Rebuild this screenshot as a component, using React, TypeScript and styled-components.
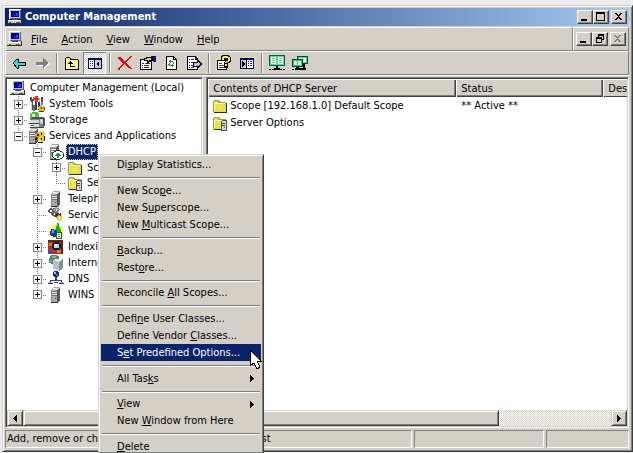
import React from 'react';
import styled, { createGlobalStyle, css } from 'styled-components';

const face = '#d4d0c8';
const shade = '#808080';
const dark = '#404040';
const navy = '#0a246a';

const GlobalStyle = createGlobalStyle`
  * { box-sizing: border-box; }
  html, body, #root { height: 100%; }
  body {
    margin: 0;
    overflow: hidden;
    background: #ececec;
    color: #000;
    font: 11px/16px "DejaVu Sans Condensed", "DejaVu Sans", Tahoma, sans-serif;
    cursor: default;
  }
  button { font: inherit; color: inherit; padding: 0; margin: 0; border: 0; background: none; }
  svg { display: block; flex: none; }
`;

/* ---------- window frame ---------- */

const Desktop = styled.div`
  display: flex;
  height: 100%;
  padding: 5px 0 1px 2px;
`;

const WindowFrame = styled.div`
  display: flex;
  flex-direction: column;
  flex: 1;
  min-width: 0;
  padding: 2px 3px 3px 2px;
  background: ${face};
  border: 1px solid;
  border-color: ${face} ${dark} ${dark} ${face};
  box-shadow: inset 1px 1px #fff, inset -1px -1px ${shade};
`;

const TitleBar = styled.header`
  display: flex;
  align-items: center;
  height: 18px;
  padding: 0 2px;
  margin-bottom: 1px;
  background: linear-gradient(to right, ${navy}, #a6caf0);
  color: #fff;
`;

const TitleText = styled.h1`
  flex: 1;
  margin: 0 0 0 2px;
  font-size: 11px;
  font-weight: bold;
  line-height: 18px;
`;

const CaptionButtons = styled.div`
  display: flex;
`;

const CaptionButton = styled.button<{ $apart?: boolean }>`
  display: flex;
  align-items: center;
  justify-content: center;
  width: 16px;
  height: 14px;
  margin-left: ${p => (p.$apart ? 2 : 0)}px;
  background: ${face};
  border: 1px solid;
  border-color: #fff ${dark} ${dark} #fff;
  box-shadow: inset -1px -1px ${shade};
  color: #000;
  &:disabled { color: ${shade}; }
`;

const bar = css`
  display: flex;
  align-items: center;
  height: 24px;
  border: 1px solid;
  border-color: #fff ${shade} ${shade} #fff;
`;

const MenuRow = styled.div`
  display: flex;
`;

const MenuBar = styled.nav`
  ${bar}
  flex: 1;
  padding-left: 1px;
`;

const ChildButtons = styled.div`
  ${bar}
  padding: 0 2px;
`;

const MenuTitle = styled.button`
  height: 20px;
  padding: 2px 7px 0;
  &:first-of-type { margin-left: 1px; }
`;

const ToolBar = styled.div`
  ${bar}
  padding-left: 1px;
`;

const ToolButton = styled.button<{ $pressed?: boolean }>`
  display: flex;
  align-items: center;
  justify-content: center;
  width: 23px;
  height: 22px;
  ${p =>
    p.$pressed &&
    css`
      background: repeating-conic-gradient(#fff 0 25%, ${face} 0 50%) 0 0 / 2px 2px;
      box-shadow: inset 1px 1px ${shade}, inset -1px -1px #fff;
    `}
`;

const ToolDivider = styled.span`
  width: 2px;
  height: 20px;
  margin: 0 2px 0 3px;
  border-left: 1px solid ${shade};
  border-right: 1px solid #fff;
`;

/* ---------- panes ---------- */

const Panes = styled.main`
  display: grid;
  grid-template-columns: minmax(0, 198fr) minmax(0, 422fr);
  gap: 3px;
  flex: 1;
  min-height: 0;
  padding-top: 1px;
  margin-bottom: 2px;
  border-top: 1px solid #fff;
`;

const Pane = styled.section`
  display: flex;
  flex-direction: column;
  min-width: 0;
  min-height: 0;
  overflow: hidden;
  background: #fff;
  border: 1px solid;
  border-color: ${shade} #fff #fff ${shade};
  box-shadow: inset 1px 1px ${dark}, inset -1px -1px ${face};
  padding: 1px;
`;

const PaneBody = styled.div`
  flex: 1;
  min-height: 0;
  overflow: hidden;
`;

const Tree = styled.ul`
  list-style: none;
  margin: 0;
  padding: 1px 0 0 2px;
`;

const TreeRow = styled.li<{ $short?: boolean }>`
  display: flex;
  height: ${p => (p.$short ? 15 : 16)}px;
  white-space: nowrap;
`;

const dotsDown = 'repeating-linear-gradient(to bottom, #808080 0 1px, transparent 1px 2px)';
const dotsAcross = 'repeating-linear-gradient(to right, #808080 0 1px, transparent 1px 2px)';

type Guide = 'blank' | 'through' | 'branch' | 'last';

const guides: Record<Guide, string> = {
  blank: 'none',
  through: `${dotsDown} 9px 0 / 1px 100% no-repeat`,
  branch: `${dotsDown} 9px 0 / 1px 100% no-repeat, ${dotsAcross} 9px 8px / 10px 1px no-repeat`,
  last: `${dotsDown} 9px 0 / 1px 8px no-repeat, ${dotsAcross} 9px 8px / 10px 1px no-repeat`,
};

const GuideCell = styled.span<{ $guide: Guide }>`
  display: flex;
  align-items: center;
  justify-content: center;
  width: 19px;
  background: ${p => guides[p.$guide]};
`;

const Expander = styled.button<{ $open?: boolean }>`
  width: 9px;
  height: 9px;
  border: 1px solid ${shade};
  background:
    linear-gradient(#000, #000) 1px 3px / 5px 1px no-repeat,
    ${p => (p.$open ? '' : 'linear-gradient(#000, #000) 3px 1px / 1px 5px no-repeat,')}
    #fff;
`;

const NodeIcon = styled.span`
  display: flex;
  align-items: center;
  margin: 0 2px 0 1px;
`;

const NodeLabel = styled.span<{ $selected?: boolean }>`
  padding: 0 2px;
  ${p => p.$selected && css`background: ${navy}; color: #fff; outline: 1px dotted #d8c080; outline-offset: -1px;`}
`;

const List = styled.table`
  width: 100%;
  table-layout: fixed;
  border-collapse: collapse;
`;

const HeadCell = styled.th<{ $width?: string }>`
  width: ${p => p.$width || 'auto'};
  height: 18px;
  padding: 1px 0 0 5px;
  white-space: nowrap;
  text-align: left;
  font-weight: normal;
  background: ${face};
  box-shadow: inset 1px 1px #fff, inset 0 -1px ${dark};
  &:not(:last-child) { box-shadow: inset 1px 1px #fff, inset -1px -1px ${dark}, inset -2px -2px ${shade}; }
`;

const Cell = styled.td<{ $first?: boolean }>`
  height: 17px;
  padding: 1px 0 0 ${p => (p.$first ? 4 : 5)}px;
  white-space: nowrap;
`;

const Entry = styled.span`
  display: flex;
  align-items: center;
  gap: 2px;
`;

/* ---------- scroll bar ---------- */

const ScrollBar = styled.div`
  display: flex;
  height: 16px;
  background: repeating-conic-gradient(#fff 0 25%, ${face} 0 50%) 0 0 / 2px 2px;
`;

const raised = css`
  background: ${face};
  border: 1px solid;
  border-color: ${face} ${dark} ${dark} ${face};
  box-shadow: inset 1px 1px #fff, inset -1px -1px ${shade};
`;

const ScrollArrow = styled.button`
  ${raised}
  display: flex;
  align-items: center;
  justify-content: center;
  width: 16px;
`;

const ScrollTrack = styled.div`
  flex: 1;
  display: flex;
`;

const ScrollThumb = styled.div<{ $share: number }>`
  ${raised}
  width: ${p => p.$share}%;
`;

/* ---------- status bar ---------- */

const StatusBar = styled.footer`
  display: grid;
  grid-template-columns: minmax(0, 406fr) minmax(0, 130fr) minmax(0, 83fr);
  gap: 2px;
  height: 18px;
`;

const StatusCell = styled.div`
  padding-left: 1px;
  overflow: hidden;
  white-space: nowrap;
  border: 1px solid;
  border-color: ${shade} #fff #fff ${shade};
`;

/* ---------- context menu ---------- */

const ContextMenu = styled.div`
  position: absolute;
  left: 98px;
  top: 154px;
  bottom: 0;
  width: 166px;
  padding: 2px;
  overflow: hidden;
  background: ${face};
  border: 1px solid;
  border-color: ${face} ${dark} ${shade} ${face};
  box-shadow: inset 1px 1px #fff, inset -1px 0 ${shade};
`;

const MenuItem = styled.button<{ $short?: boolean; $active?: boolean }>`
  display: flex;
  align-items: center;
  justify-content: space-between;
  width: 100%;
  height: ${p => (p.$short ? 16 : 17)}px;
  padding: 0 7px 0 16px;
  white-space: nowrap;
  ${p => p.$active && css`background: ${navy}; color: #fff;`}
`;

const MenuRule = styled.hr`
  height: 2px;
  margin: 4px 1px 3px;
  border: 0;
  border-top: 1px solid ${shade};
  border-bottom: 1px solid #fff;
`;

const Pointer = styled.svg`
  position: absolute;
  left: 249px;
  top: 349px;
`;

/* ---------- icons ---------- */

const Icon = ({ children, size = 16 }: { children: React.ReactNode; size?: number }) => (
  <svg width={size} height={size} viewBox="0 0 16 16" shapeRendering="crispEdges" aria-hidden="true">
    {children}
  </svg>
);

const ComputerIcon = () => (
  <Icon>
    <path d="M2 0h11l1 1v9H2z" fill="#c0c0c0" />
    <path d="M2 0h11v1H3v9H2z" fill="#fff" />
    <path d="M13 1h1v9H3V9h10z" fill="#606060" />
    <path d="M4 2h8v6H4z" fill="#0000b8" />
    <path d="M4 2h8v1H5v5H4z" fill="#101050" />
    <path d="M9 4h2v3H7V6h2z" fill="#2040ff" />
    <path d="M5 10h6v1H5z" fill="#404040" />
    <path d="M1 11h12l2 1v3H1z" fill="#c8c8c0" />
    <path d="M1 11h12v1H1z" fill="#fff" />
    <path d="M0 14h15v1H0zM14 10h1v5h-1z" fill="#303030" />
    <path d="M9 13h4v1H9z" fill="#606060" />
    <path d="M2 13h2v1H2z" fill="#00a000" />
  </Icon>
);

const ToolsIcon = () => (
  <Icon>
    <path d="M1 1h2v2h1V1h1v4H4v9H2V5H1z" fill="#505050" />
    <path d="M2 6h1v8H2z" fill="#d0d0d0" />
    <path d="M5 2h1V0h3v2h1v2H9v2H6V4H5z" fill="#e03020" />
    <path d="M6 6h2v8H6z" fill="#902010" />
    <path d="M10 2h1v5h-1z" fill="#b0b0b0" />
    <path d="M9 6h2v8H9z" fill="#1830c0" />
    <path d="M12 1h2v4h-2z" fill="#404040" />
    <path d="M12 5h2v4h-2z" fill="#20a0c0" />
    <path d="M4 9h2v6H4z" fill="#109090" />
    <path d="M10 10h1V9h2v1h2v1h1v2h-1v2h-5v-2H9v-2h1z" fill="#e0b820" />
    <path d="M12 11h1v2h-1zM10 15h5v1h-5zM15 11h1v3h-1z" fill="#504000" />
  </Icon>
);

const StorageIcon = () => (
  <Icon>
    <path d="M1 2l3-2h4l2 2v5H1z" fill="#58b848" />
    <path d="M3 2h3v3H3z" fill="#c8f0c0" />
    <path d="M1 7h14v8H1z" fill="#808080" />
    <path d="M3 5h12l1 2v7h-2V7H1z" fill="#505050" />
    <path d="M1 8h9v3H1zM1 12h9v3H1z" fill="#d8d8d8" />
    <path d="M11 7h3v5h-3z" fill="#b8c8c8" />
    <path d="M12 8h1v2h-1z" fill="#fff" />
    <path d="M0 11h10v1H0zM1 15h14v1H1z" fill="#404040" />
    <path d="M2 13h3v1H2z" fill="#20a020" />
  </Icon>
);

const Tower = ({ x = 0 }: { x?: number }) => (
  <g transform={`translate(${x} 0)`}>
    <path d="M3 2l3-2h6v12l-3 3H3z" fill="#a8a8a8" />
    <path d="M3 2l3-1h6L9 3H3z" fill="#e8e8e8" />
    <path d="M9 3l3-2v12l-3 3z" fill="#585858" />
    <path d="M3 3h1v12H3z" fill="#888" />
    <path d="M4 4h5v1H4zM4 6h5v1H4zM4 8h5v1H4z" fill="#707070" />
    <path d="M4 5h5v1H4zM4 7h5v1H4z" fill="#f0f0f0" />
    <path d="M7 11h1v1H7z" fill="#e02020" />
    <path d="M3 15h7v1H3z" fill="#303030" />
  </g>
);

const ServerIcon = () => <Icon><Tower /></Icon>;

const gear = 'M2 0h2v1h1V0h1v2h1v1H6v2H5v1H3V5H1V4H0V2h1V1h1z';

const ServiceAppsIcon = () => (
  <Icon>
    <Tower x={-3} />
    <path d={gear} transform="translate(6 4)" fill="#d8b020" />
    <path d={gear} transform="translate(9 8)" fill="#e8d030" />
    <path d={gear} transform="translate(9 3)" fill="#e0c028" />
    <path d="M8 6h2v2H8zM12 5h1v2h-1zM12 10h1v2h-1zM6 10h2v2H6zM9 14h5v1H9zM15 8h1v5h-1z" fill="#201800" />
  </Icon>
);

const DhcpIcon = () => (
  <Icon>
    <Tower x={-1} />
    <path d="M8 6h4v1h2v1h1v1h1v4h-1v1h-1v1h-2v1H8v-1H6v-1H5v-1H4V9h1V8h1V7h2z" fill="#303030" />
    <path d="M8 7h4v1h2v1h1v4h-1v1h-2v1H8v-1H6v-1H5V9h1V8h2z" fill="#fff" />
    <path d="M9 9h2v1h1v1h1v1h-2v2H9v-2H7v-1h1v-1h1z" fill="#109838" />
  </Icon>
);

const folderShape = (
  <>
    <path d="M1 3h1V2h5v1h1v1h6v10H1z" fill="#e0dc60" />
    <path d="M2 5h11v1H3v7H2z" fill="#fffcb8" />
    <path d="M1 3h1V2h5v1h1v1h6v1H7L6 3H2v11H1z" fill="#989838" />
    <path d="M14 5h1v10H2v-1h12z" fill="#303018" />
    <path d="M5 7h6v5H5z" fill="#f0e840" />
  </>
);

const FolderIcon = () => <Icon>{folderShape}</Icon>;

const FolderServerIcon = () => (
  <Icon>
    {folderShape}
    <path d="M9 6l1-1h5v9l-1 1H9z" fill="#505050" />
    <path d="M10 6h4v9h-4z" fill="#d8d8d8" />
    <path d="M10 8h3v1h-3zM10 10h3v1h-3zM9 15h6v1H9z" fill="#484848" />
    <path d="M12 12h1v1h-1z" fill="#e02020" />
  </Icon>
);

const GearsIcon = () => (
  <Icon>
    <path d={gear} transform="translate(0 1)" fill="#505050" />
    <path d={gear} transform="translate(5 0)" fill="#909090" />
    <path d={gear} transform="translate(3 4)" fill="#686868" />
    <path d={gear} transform="translate(7 6)" fill="#303018" />
    <path d={gear} transform="translate(8 8)" fill="#d8cc48" />
    <path d="M2 3h2v2H2zM8 2h1v2H8zM6 6h1v2H6zM11 10h1v2h-1z" fill="#fff" />
  </Icon>
);

const WmiIcon = () => (
  <Icon>
    <path d="M4 2h8v2h3v9h-2v2H3v-2H1V6h1V4h2z" fill="#f8f060" />
    <path d="M0 7h3v6H0z" fill="#f0f0a0" />
    <path d="M9 0h2v4h1v2h1v3H7V6h1V3h1z" fill="#20a828" />
    <path d="M3 6h3v1h3v7H5v-1H3v-1H2V8h1z" fill="#1838a8" />
    <path d="M4 7h2v3H4z" fill="#60a8f0" />
    <path d="M8 9h6v7H8z" fill="#186028" />
    <path d="M9 10h4v5H9z" fill="#fff" />
    <path d="M10 11h2v1h-2zM10 13h2v1h-2z" fill="#209028" />
  </Icon>
);

const IndexIcon = () => (
  <Icon>
    <path d="M0 1h15v14H0z" fill="#a83818" />
    <path d="M0 1h15v2H0zM13 3h2v12h-2z" fill="#602010" />
    <path d="M1 4h3v3H1zM9 11h4v3H9z" fill="#e07828" />
    <path d="M6 3h5v1h1v1h1v4h-1v1h-1v1H6v-1H5V9H4V5h1V4h1z" fill="#101840" />
    <path d="M6 5h5v4H6z" fill="#a8d8f8" />
    <path d="M7 5h2v2H7z" fill="#fff" />
    <path d="M4 10h2v2H4v2H2v1H0v-2h2v-1h2z" fill="#2058d8" />
  </Icon>
);

const InternetIcon = () => (
  <Icon>
    <path d="M3 0h6v1h2v3H8v5H3V8H1V3h1V1h1z" fill="#389080" />
    <path d="M4 1h4v2H4zM2 5h2v2H2z" fill="#c89868" />
    <path d="M5 5l2-1h8v10l-4 2-6-2z" fill="#b8c0c8" />
    <path d="M11 7l4-3v9l-4 3z" fill="#888e98" />
    <path d="M5 5l2-1h8l-4 3z" fill="#e4e8ec" />
  </Icon>
);

const DnsIcon = () => (
  <Icon>
    <path d="M6 0h4v1h1v4h-1v1H6V5H5V1h1z" fill="#18286c" />
    <path d="M6 1h2v2H6z" fill="#98c0f0" />
    <path d="M8 3h2v2H8z" fill="#2880b0" />
    <path d="M7 6h2v3h5v3h-1v-2H3v2H2V9h5z" fill="#404048" />
    <path d="M0 12h5v1H0zM11 12h5v1h-5zM6 11h4v1H6z" fill="#303890" />
    <path d="M1 11h3v1H1zM12 11h3v1h-3z" fill="#8890d8" />
  </Icon>
);

const BackIcon = () => (
  <Icon>
    <path d="M2 8l4-4h1v3h7v3H7v3H6z" fill="#20e0e8" stroke="#000" />
  </Icon>
);

const ForwardIcon = () => (
  <Icon>
    <path d="M15 9l-5 5V11H3V8h7V4z" fill="#fff" />
    <path d="M14 8l-5 5V10H2V7h7V3z" fill="#808080" />
  </Icon>
);

const UpIcon = () => (
  <Icon>
    <path d="M1 3h1V2h4v1h1v1h7v10H1z" fill="#fff888" />
    <path d="M2 2h4v1H2zM1 3h1v11H1zM6 3h1v1h7v1H6zM14 5h1v9h-1zM1 14h14v1H1z" />
    <path d="M6 6h1v1h1v1h1v1H7v2h4v1H6V9H4V8h1V7h1z" />
  </Icon>
);

const PanelIcon = ({ flip }: { flip?: boolean }) => (
  <Icon>
    <path d="M1 3h14v11H1z" fill="#000060" />
    <path d="M2 5h5v8H2zM8 5h6v8H8z" fill="#fff" />
    {flip ? (
      <>
        <path d="M2 5h5v8H2z" fill="#c8c8c8" />
        <path d="M3 6l3 3-3 3z" />
        <path d="M9 6h1v1H9zM11 6h2v1h-2zM9 8h1v1H9zM11 8h2v1h-2zM9 10h1v1H9zM11 10h2v1h-2z" fill="#2020a0" />
      </>
    ) : (
      <>
        <path d="M8 5h6v8H8z" fill="#c8c8c8" />
        <path d="M12 6l-3 3 3 3z" />
        <path d="M3 6h1v1H3zM5 6h1v1H5zM3 8h1v1H3zM5 8h1v1H5zM3 10h1v1H3zM5 10h1v1H5z" fill="#2020a0" />
      </>
    )}
  </Icon>
);

const DeleteIcon = () => (
  <Icon>
    <path d="M1 2h3v1h1v1h1v1h1v1h2V5h1V4h1V3h1V2h1V1h2v1h-1v1h-1v1h-1v1h-1v1h-1v1H9v1h1v1h1v1h1v1h1v1h1v1h1v1h-2v-1h-2v-1h-1v-1H9v-1H8V9H7v1H6v1H5v1H4v1H3v2H1v-2h1v-1h1v-1h1v-1h1V9h1V8H5V7H4V6H3V5H2V4H1z" fill="#e01010" />
  </Icon>
);

const PropertiesIcon = () => (
  <Icon>
    <path d="M0 4h12v11H0z" />
    <path d="M1 5h10v9H1z" fill="#fff" />
    <path d="M2 8h2v1H2zM5 8h5v1H5zM2 10h1v1H2zM4 10h5v1H4zM2 12h1v1H2zM4 12h5v1H4z" fill="#303030" />
    <path d="M4 3h2V2h5V1h2v5h-2v1H9v1H7V6H4z" />
    <path d="M5 4h2V3h4v2H9v1H8V5H5z" fill="#c8c8a0" />
    <path d="M13 1h3v6h-3z" fill="#101080" />
  </Icon>
);

const RefreshIcon = () => (
  <Icon>
    <path d="M3 1h8v1h1v1h1v1h1v11H3z" />
    <path d="M4 2h6v3h3v9H4z" fill="#fff" />
    <path d="M11 3h1v1h-1z" fill="#fff" />
    <path d="M7 5h1v1h2v1h1v2h-1V7H8v1H7V7H6V6h1zM6 8h1v2h2V9h1v1h1v1h-1v1H9v-1H6v-1H5V9h1z" fill="#189040" />
  </Icon>
);

const ExportIcon = () => (
  <Icon>
    <path d="M1 1h9v1h1v1h1v12H1z" />
    <path d="M2 2h7v3h2v9H2z" fill="#fff" />
    <path d="M3 4h1v1H3zM5 4h3v1H5zM3 7h1v1H3zM5 7h3v1H5zM3 10h1v1H3zM5 10h2v1H5zM3 12h1v1H3zM5 12h3v1H5z" fill="#202070" />
    <path d="M7 7h4V5h1l4 4-4 5h-1v-2H7z" />
    <path d="M8 8h4V7l2 2-2 3v-1H8z" fill="#c0c0c0" />
  </Icon>
);

const HelpIcon = () => (
  <Icon>
    <path d="M1 5h10v10H1z" />
    <path d="M2 6h8v8H2z" fill="#fff" />
    <path d="M3 8h3v1H3zM3 10h5v1H3zM3 12h5v1H3z" fill="#404040" />
    <path d="M6 0h7v1h1v1h1v5h-1v1h-2v5H8V7h1V6H6V5H5V1h1z" />
    <path d="M7 1h5v1h2v4h-1v1h-2v1H9V7h1V6h2V3H8v2H6V2h1zM9 9h2v2H9z" fill="#f8f030" />
  </Icon>
);

const RemoteIcon = () => (
  <Icon>
    <path d="M0 0h16v11H0z" fill="#006048" />
    <path d="M1 1h14v9H1z" fill="#58d0b0" />
    <path d="M2 2h5v7H2zM9 2h5v7H9z" fill="#f0f8d0" />
    <path d="M3 3h3v1H3zM3 5h3v1H3zM3 7h3v1H3zM10 3h3v1h-3zM10 5h3v1h-3zM10 7h3v1h-3z" fill="#78c088" />
    <path d="M7 11h2v2H7zM5 13h6v2H5zM0 14h2v1H0zM3 14h2v1H3zM11 14h2v1h-2zM14 14h2v1h-2z" />
  </Icon>
);

const RemotePairIcon = () => (
  <Icon>
    <g transform="translate(5 1)">
      <path d="M0 0h11v8H0z" fill="#004838" />
      <path d="M1 1h9v6H1z" fill="#58d0a0" />
      <path d="M2 2h3v4H2zM6 2h3v4H6z" fill="#e8f8c8" />
    </g>
    <g transform="translate(0 4)">
      <path d="M0 0h11v8H0z" fill="#004838" />
      <path d="M1 1h9v6H1z" fill="#38c0a0" />
      <path d="M2 2h3v4H2zM6 2h3v4H6z" fill="#e0f8a8" />
    </g>
    <path d="M4 12h3v1h4V9h2v4h1v2H3v-2h1zM0 14h2v1H0z" />
  </Icon>
);

const Glyph = ({ children }: { children: React.ReactNode }) => (
  <svg width="10" height="10" viewBox="0 0 10 10" shapeRendering="crispEdges" fill="currentColor" aria-hidden="true">
    {children}
  </svg>
);
const MinimizeGlyph = () => <Glyph><path d="M1 7h6v2H1z" /></Glyph>;
const MaximizeGlyph = () => <Glyph><path d="M0 0h9v9H0zM1 2v6h7V2z" fillRule="evenodd" /></Glyph>;
const RestoreGlyph = () => (
  <Glyph><path d="M3 0h6v6H7V5h1V2H4v1H3zM1 3h6v6H1zM2 5v3h4V5z" fillRule="evenodd" /></Glyph>
);
const CloseGlyph = () => (
  <Glyph><path d="M1 1h2v1h1v1h1V2h1V1h2v1H7v1H6v1H5v1h1v1h1v1h1v1H6V7H5V6H4v1H3v1H1V7h1V6h1V5h1V4H3V3H2V2H1z" /></Glyph>
);
const Triangle = ({ left }: { left?: boolean }) => (
  <svg width="4" height="7" viewBox="0 0 4 7" shapeRendering="crispEdges" fill="currentColor" aria-hidden="true">
    <path d={left ? 'M4 0v7h-1V6H2V5H1V4H0V3h1V2h1V1h1V0z' : 'M0 0v7h1V6h1V5h1V4h1V3H3V2H2V1H1V0z'} />
  </svg>
);

/* ---------- data ---------- */

/** Text with one underlined access key, marked by a leading "&". */
const Keyed = ({ text }: { text: string }) => {
  const at = text.indexOf('&');
  if (at < 0) return <span>{text}</span>;
  return (
    <span>
      {text.slice(0, at)}
      <u>{text[at + 1]}</u>
      {text.slice(at + 2)}
    </span>
  );
};

type Node = {
  label: string;
  icon: React.ReactNode;
  guides: Guide[];
  state?: 'open' | 'closed';
  selected?: boolean;
  short?: boolean;
};

const nodes: Node[] = [
  { label: 'Computer Management (Local)', icon: <ComputerIcon />, guides: [] },
  { label: 'System Tools', icon: <ToolsIcon />, guides: ['branch'], state: 'closed' },
  { label: 'Storage', icon: <StorageIcon />, guides: ['branch'], state: 'closed' },
  { label: 'Services and Applications', icon: <ServiceAppsIcon />, guides: ['last'], state: 'open' },
  { label: 'DHCP', icon: <DhcpIcon />, guides: ['blank', 'branch'], state: 'open', selected: true },
  { label: 'Scope', icon: <FolderIcon />, guides: ['blank', 'through', 'branch'], state: 'closed', short: true },
  { label: 'Server Options', icon: <FolderServerIcon />, guides: ['blank', 'through', 'last'] },
  { label: 'Telephony', icon: <ServerIcon />, guides: ['blank', 'branch'], state: 'closed' },
  { label: 'Services', icon: <GearsIcon />, guides: ['blank', 'branch'] },
  { label: 'WMI Control', icon: <WmiIcon />, guides: ['blank', 'branch'] },
  { label: 'Indexing Service', icon: <IndexIcon />, guides: ['blank', 'branch'], state: 'closed' },
  { label: 'Internet Information', icon: <InternetIcon />, guides: ['blank', 'branch'], state: 'closed' },
  { label: 'DNS', icon: <DnsIcon />, guides: ['blank', 'branch'], state: 'closed' },
  { label: 'WINS', icon: <ServerIcon />, guides: ['blank', 'last'], state: 'closed', short: true },
];

const tools: (null | { name: string; icon: React.ReactNode; pressed?: boolean })[] = [
  { name: 'Back', icon: <BackIcon /> },
  { name: 'Forward', icon: <ForwardIcon /> },
  null,
  { name: 'Up one level', icon: <UpIcon /> },
  { name: 'Show or hide console tree', icon: <PanelIcon />, pressed: true },
  null,
  { name: 'Delete', icon: <DeleteIcon /> },
  { name: 'Properties', icon: <PropertiesIcon /> },
  { name: 'Refresh', icon: <RefreshIcon /> },
  { name: 'Export list', icon: <ExportIcon /> },
  null,
  { name: 'Help', icon: <HelpIcon /> },
  { name: 'Show or hide action pane', icon: <PanelIcon flip /> },
  null,
  { name: 'Add server', icon: <RemoteIcon /> },
  { name: 'Connect servers', icon: <RemotePairIcon /> },
];

type Item = null | { text: string; sub?: boolean; short?: boolean; active?: boolean };

const items: Item[] = [
  { text: 'Di&splay Statistics...', short: true },
  null,
  { text: 'New Sco&pe...' },
  { text: 'New S&uperscope...' },
  { text: 'New &Multicast Scope...' },
  null,
  { text: '&Backup...' },
  { text: 'Rest&ore...' },
  null,
  { text: 'Reconcile &All Scopes...', short: true },
  null,
  { text: 'Defi&ne User Classes...' },
  { text: 'Define Vendor &Classes...' },
  { text: 'S&et Predefined Options...', active: true },
  null,
  { text: 'All Tas&ks', sub: true },
  null,
  { text: '&View', sub: true, short: true },
  { text: 'New &Window from Here' },
  null,
  { text: '&Delete' },
];

/* ---------- page ---------- */

export default function App() {
  return (
    <>
      <GlobalStyle />
      <Desktop>
        <WindowFrame>
          <TitleBar>
            <ComputerIcon />
            <TitleText>Computer Management</TitleText>
            <CaptionButtons>
              <CaptionButton aria-label="Minimize"><MinimizeGlyph /></CaptionButton>
              <CaptionButton aria-label="Maximize"><MaximizeGlyph /></CaptionButton>
              <CaptionButton aria-label="Close" $apart><CloseGlyph /></CaptionButton>
            </CaptionButtons>
          </TitleBar>

          <MenuRow>
            <MenuBar>
              <ComputerIcon />
              {['&File', '&Action', '&View', '&Window', '&Help'].map(t => (
                <MenuTitle key={t}><Keyed text={t} /></MenuTitle>
              ))}
            </MenuBar>
            <ChildButtons>
              <CaptionButton aria-label="Minimize console"><MinimizeGlyph /></CaptionButton>
              <CaptionButton aria-label="Restore console"><RestoreGlyph /></CaptionButton>
              <CaptionButton aria-label="Close console" $apart disabled><CloseGlyph /></CaptionButton>
            </ChildButtons>
          </MenuRow>

          <ToolBar role="toolbar">
            {tools.map((t, i) =>
              t ? (
                <ToolButton key={i} aria-label={t.name} $pressed={t.pressed}>{t.icon}</ToolButton>
              ) : (
                <ToolDivider key={i} />
              ),
            )}
          </ToolBar>

          <Panes>
            <Pane>
              <PaneBody>
                <Tree>
                  {nodes.map(n => (
                    <TreeRow key={n.label} $short={n.short}>
                      {n.guides.map((g, i) => (
                        <GuideCell key={i} $guide={g}>
                          {n.state && i === n.guides.length - 1 && (
                            <Expander $open={n.state === 'open'} aria-label={`Toggle ${n.label}`} />
                          )}
                        </GuideCell>
                      ))}
                      <NodeIcon>{n.icon}</NodeIcon>
                      <NodeLabel $selected={n.selected}>{n.label}</NodeLabel>
                    </TreeRow>
                  ))}
                </Tree>
              </PaneBody>
              <ScrollBar>
                <ScrollArrow aria-label="Scroll tree left"><Triangle left /></ScrollArrow>
                <ScrollTrack><ScrollThumb $share={80} /></ScrollTrack>
                <ScrollArrow aria-label="Scroll tree right"><Triangle /></ScrollArrow>
              </ScrollBar>
            </Pane>

            <Pane>
              <PaneBody>
                <List>
                  <thead>
                    <tr>
                      <HeadCell $width="248px">Contents of DHCP Server</HeadCell>
                      <HeadCell $width="147px">Status</HeadCell>
                      <HeadCell>Des</HeadCell>
                    </tr>
                  </thead>
                  <tbody>
                    <tr>
                      <Cell $first><Entry><FolderIcon />Scope [192.168.1.0] Default Scope</Entry></Cell>
                      <Cell>** Active **</Cell>
                      <Cell />
                    </tr>
                    <tr>
                      <Cell $first><Entry><FolderServerIcon />Server Options</Entry></Cell>
                      <Cell />
                      <Cell />
                    </tr>
                  </tbody>
                </List>
              </PaneBody>
              <ScrollBar>
                <ScrollArrow aria-label="Scroll list left"><Triangle left /></ScrollArrow>
                <ScrollTrack><ScrollThumb $share={71} /></ScrollTrack>
                <ScrollArrow aria-label="Scroll list right"><Triangle /></ScrollArrow>
              </ScrollBar>
            </Pane>
          </Panes>

          <StatusBar>
            <StatusCell>Add, remove or change options within the default list</StatusCell>
            <StatusCell />
            <StatusCell />
          </StatusBar>
        </WindowFrame>
      </Desktop>

      <ContextMenu role="menu">
        {items.map((it, i) =>
          it ? (
            <MenuItem key={i} role="menuitem" $short={it.short} $active={it.active}>
              <Keyed text={it.text} />
              {it.sub && <Triangle />}
            </MenuItem>
          ) : (
            <MenuRule key={i} />
          ),
        )}
      </ContextMenu>
      <Pointer width="13" height="21" viewBox="0 0 13 21" shapeRendering="crispEdges" aria-hidden="true">
        <path d="M1 1l11 11H8l3 6-3 2-3-6-4 3z" fill="#fff" stroke="#000" />
      </Pointer>
    </>
  );
}
